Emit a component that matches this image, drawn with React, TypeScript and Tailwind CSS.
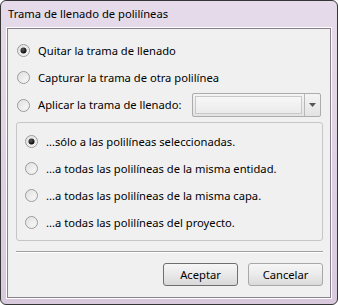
import React from "react";

const font = { fontFamily: '"Segoe UI", "Noto Sans", "Open Sans", sans-serif' };

function Radio({ checked }: { checked?: boolean }) {
  return (
    <svg width="13" height="13" viewBox="0 0 13 13" className="shrink-0">
      <defs>
        <linearGradient id="rb" x1="0" y1="0" x2="1" y2="1">
          <stop offset="0" stopColor="#dcdcdc" />
          <stop offset="1" stopColor="#ffffff" />
        </linearGradient>
        <radialGradient id="dot" cx="0.4" cy="0.35" r="0.7">
          <stop offset="0" stopColor="#5a5a5a" />
          <stop offset="1" stopColor="#000000" />
        </radialGradient>
      </defs>
      <circle cx="6.5" cy="6.5" r="6" fill="url(#rb)" stroke="#9a9a9a" strokeWidth="1" />
      <circle cx="6.5" cy="6.5" r="4.6" fill="none" stroke="#e8e8e8" strokeWidth="1" />
      {checked && <circle cx="6.5" cy="6.5" r="3" fill="url(#dot)" />}
    </svg>
  );
}

function Option({ label, checked }: { label: string; checked?: boolean }) {
  return (
    <div className="flex items-center h-[27px] gap-[8px]">
      <Radio checked={checked} />
      <span className="leading-none">{label}</span>
    </div>
  );
}

export default function App() {
  return (
    <div
      className="w-[338px] h-[305px] flex flex-col border border-[#363636] rounded-[6px] bg-gradient-to-b from-[#e6dbea] to-[#d9c9dd] px-[5px] pb-[5px] text-[11.2px] text-black overflow-hidden"
      style={font}
    >
      {/* title bar */}
      <div className="h-[26px] flex items-center pl-[2px] pt-[1px]">Trama de llenado de polilíneas</div>

      {/* client area */}
      <div className="flex-1 border border-white">
        <div className="h-full border border-[#8a7f8c] bg-[#f0f0f0] flex flex-col pl-[8px] pr-[7px]">
          <div className="pt-[8px] pl-[1px]">
            <Option label="Quitar la trama de llenado" checked />
            <Option label="Capturar la trama de otra polilínea" />
            <div className="flex items-center h-[28px]">
              <div className="flex items-center gap-[8px] w-[175px] shrink-0">
                <Radio />
                <span className="leading-none whitespace-nowrap">Aplicar la trama de llenado:</span>
              </div>
              <div className="w-[129px] h-[24px] flex rounded-[2px] border border-[#acacac] bg-gradient-to-b from-[#f4f4f4] to-[#e3e3e3]">
                <div className="flex-1 m-[2px] border border-[#c8c8c8] bg-gradient-to-b from-[#f7f7f7] to-[#ebebeb]" />
                <div className="w-[16px] border-l border-[#b8b8b8] flex items-center justify-center">
                  <svg width="7" height="4" viewBox="0 0 7 4">
                    <path d="M0 0h7L3.5 4z" fill="#555" />
                  </svg>
                </div>
              </div>
            </div>
          </div>

          {/* sub group */}
          <div className="mt-[3px] h-[119px] border border-[#c6c6c6] rounded-[3px] pt-[5px] pl-[8px]">
            <Option label="...sólo a las polilíneas seleccionadas." checked />
            <Option label="...a todas las polilíneas de la misma entidad." />
            <Option label="...a todas las polilíneas de la misma capa." />
            <Option label="...a todas las polilíneas del proyecto." />
          </div>

          <div className="mt-[10px] border-t border-[#a0a0a0] border-b border-b-white" />

          <div className="mt-[10px] flex justify-end gap-[10px]">
            <button className="w-[75px] h-[23px] rounded-[3px] border border-[#6f6f6f] bg-gradient-to-b from-[#f6f6f6] via-[#e9e9e9] to-[#d8d8d8] leading-none">
              Aceptar
            </button>
            <button className="w-[75px] h-[23px] rounded-[3px] border border-[#a8a8a8] bg-gradient-to-b from-[#f6f6f6] via-[#ebebeb] to-[#dadada] leading-none">
              Cancelar
            </button>
          </div>
        </div>
      </div>
    </div>
  );
}
